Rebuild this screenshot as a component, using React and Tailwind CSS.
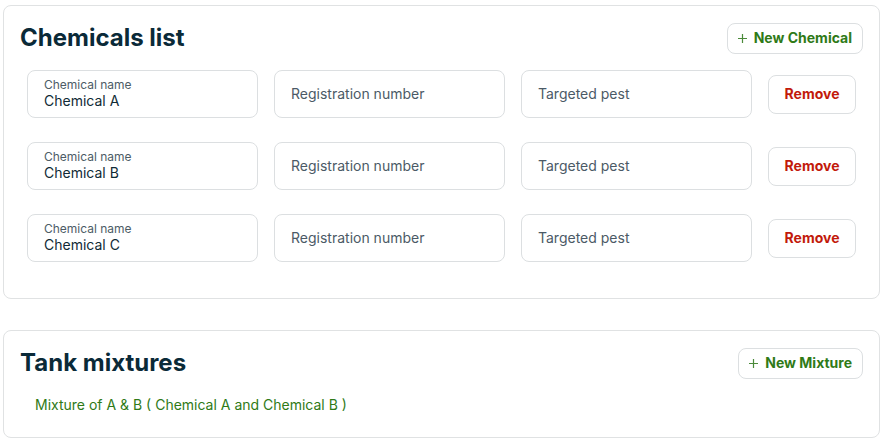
import React from "react";

const chemicals = ["Chemical A", "Chemical B", "Chemical C"];

function Field({ label, value, placeholder }) {
  return (
    <div className="flex-1 h-12 rounded-lg border border-[#dcdfe1] bg-white px-4 flex flex-col justify-center">
      {value ? (
        <>
          <div className="text-xs leading-[14px] text-[#4d5c66]">{label}</div>
          <div className="text-sm leading-[18px] text-[#0f2a36]">{value}</div>
        </>
      ) : (
        <div className="text-sm leading-5 text-[#4b5a66]">{placeholder}</div>
      )}
    </div>
  );
}

function AddButton({ text }) {
  return (
    <button className="h-[31px] pl-[10px] pr-[10px] rounded-lg border border-[#dcdfe1] bg-white flex items-center gap-[7px] text-sm text-[#2f7a17]">
      <svg width="9" height="9" viewBox="0 0 9 9" fill="none" stroke="#4b8a3a" strokeWidth="1.2">
        <path d="M4.5 0v9M0 4.5h9" />
      </svg>
      <span className="font-bold">{text}</span>
    </button>
  );
}

export default function App() {
  return (
    <div
      className="w-[885px] h-[443px] bg-white pl-[3px] pr-[5px] pt-[5px]"
      style={{ fontFamily: "Inter, 'Noto Sans', sans-serif" }}
    >
      <div className="rounded-lg border border-[#e0e2e3] p-4">
        <div className="flex items-center justify-between">
          <h2 className="text-2xl font-bold text-[#0a2a38]">Chemicals list</h2>
          <AddButton text="New Chemical" />
        </div>
        <div className="mt-[16px] px-[7px] pb-5 flex flex-col gap-6">
          {chemicals.map((c) => (
            <div key={c} className="flex items-center gap-4">
              <Field label="Chemical name" value={c} />
              <Field placeholder="Registration number" />
              <Field placeholder="Targeted pest" />
              <button className="w-[88px] h-[39px] rounded-lg border border-[#dcdfe1] bg-white text-sm font-bold text-[#c21a0b]">
                Remove
              </button>
            </div>
          ))}
        </div>
      </div>

      <div className="mt-[31px] rounded-lg border border-[#e0e2e3] p-4">
        <div className="flex items-center justify-between">
          <h2 className="text-2xl font-bold text-[#0a2a38]">Tank mixtures</h2>
          <AddButton text="New Mixture" />
        </div>
        <div className="mt-4 mb-[6px] pl-[15px] text-sm leading-5 text-[#2f7a17]">
          Mixture of A &amp; B ( Chemical A and Chemical B )
        </div>
      </div>
    </div>
  );
}
